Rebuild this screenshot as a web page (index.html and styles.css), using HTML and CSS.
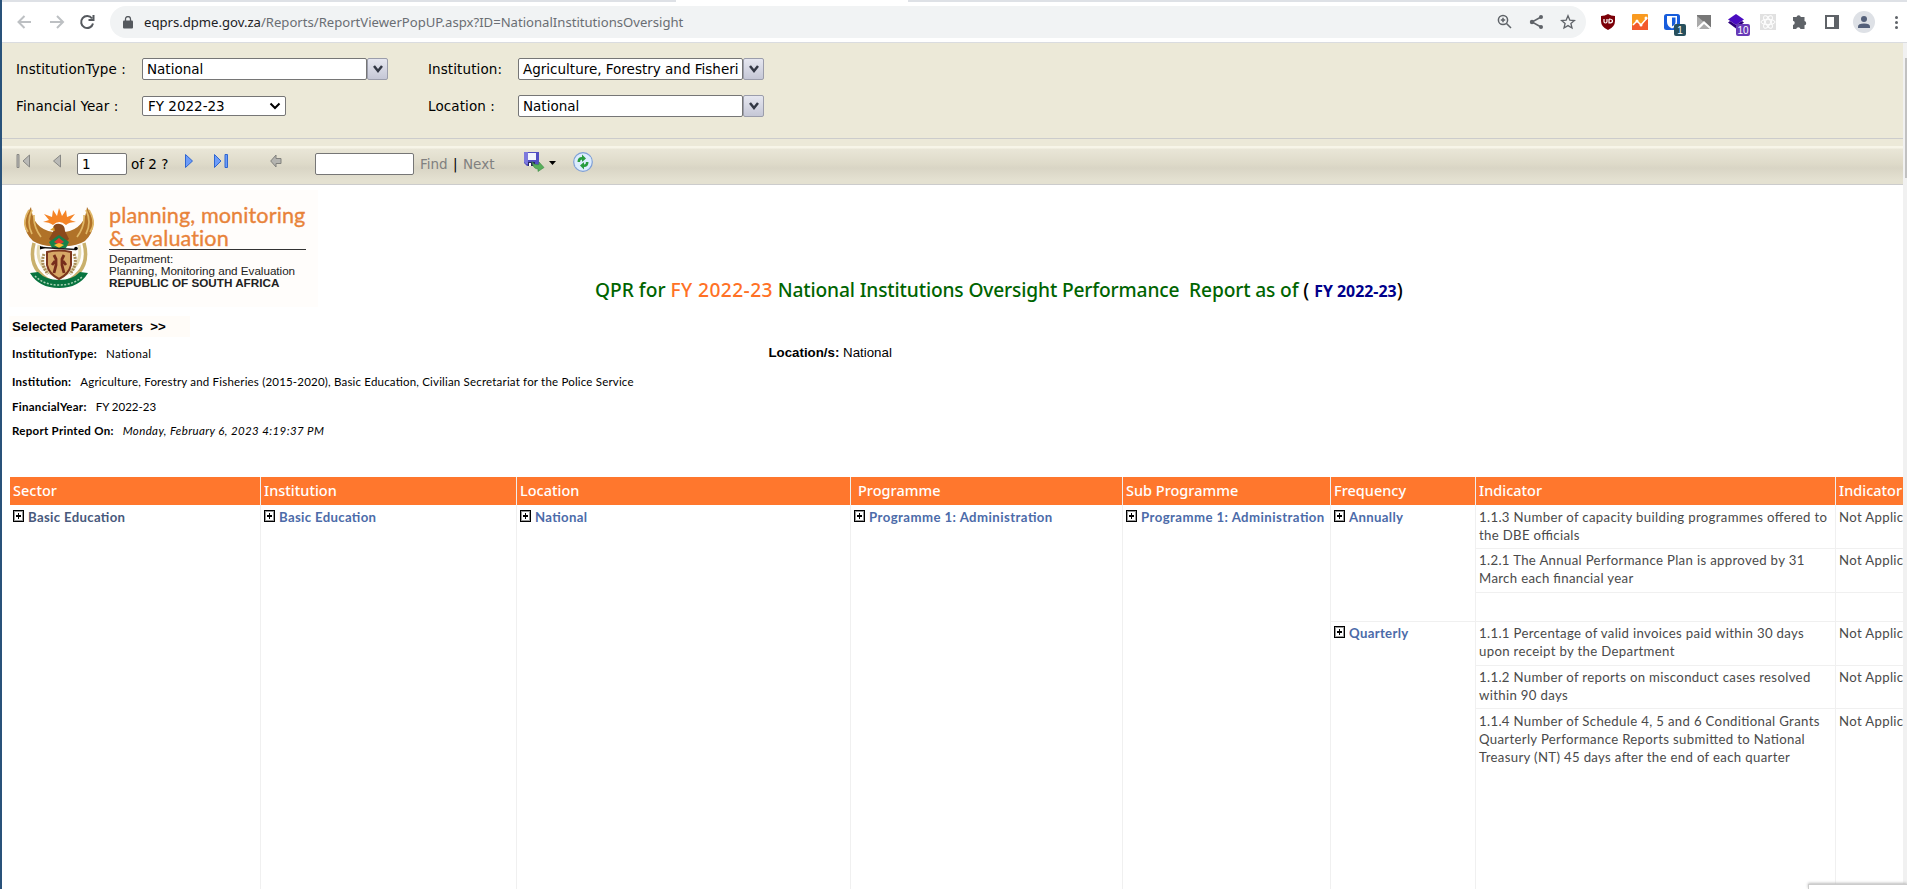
FILE: index.html
```html
<!DOCTYPE html>
<html lang="en">
<head>
<meta charset="utf-8">
<title>Report Viewer</title>
<link rel="stylesheet" href="styles.css">
</head>
<body>
<div class="window">
  <div class="tabstrip"><span class="active-tab"></span></div>
  <header class="browser">
    <svg class="nav" width="84" height="24" viewBox="0 0 84 24" fill="none" stroke-width="2">
      <path d="M16 12H4M9.500 6L3.500 12l6 6" stroke="#bdc0c3"/>
      <path d="M35 12H48M42 6l6 6l-6 6" stroke="#bdc0c3"/>
      <path d="M77 8.500A6 6 0 1 0 78 13.500M78.500 5v5h-5" stroke="#55595e"/>
    </svg>
    <div class="omnibox">
      <svg class="lock" width="10" height="13" viewBox="0 0 10 13"><rect y="4.500" width="10" height="8" rx="1" fill="#55595e"/><path d="M2.500 5V3a2.500 2.500 0 0 1 5 0v2" fill="none" stroke="#55595e" stroke-width="1.300"/></svg>
      <span class="url"><b>eqprs.dpme.gov.za</b>/Reports/ReportViewerPopUP.aspx?ID=NationalInstitutionsOversight</span>
      <svg class="page-actions" width="80" height="16" viewBox="0 0 80 16" fill="none" stroke="#5f6368" stroke-width="1.500">
        <circle cx="6" cy="6" r="4.600"/><path d="M9.500 9.500L14 14M6 3.800v4.400M3.800 6h4.400"/>
        <path d="M44 3L35 8l9 5"/><g fill="#5f6368" stroke="none"><circle cx="44" cy="3" r="2"/><circle cx="35" cy="8" r="2.200"/><circle cx="44" cy="13" r="2"/></g>
        <path d="M71 1.800l1.800 4.300 4.600.4-3.500 3 1.100 4.500-4-2.400-4 2.400 1.100-4.500-3.500-3 4.600-.4z" stroke-width="1.300"/>
      </svg>
    </div>
    <svg class="extensions" width="307" height="32" viewBox="1600 6 307 32">
      <path d="M1601 16q4 0 7-2q3 2 7 2v5q0 6-7 9q-7-3-7-9z" fill="#7b0008"/>
      <path d="M1604 19v2.500q0 1.500 1.500 1.500t1.500-1.500V19M1609 19v4q3.500 0 3.500-2t-3.500-2" fill="none" stroke="#fff" stroke-width="1.200"/>
      <rect x="1632" y="14" width="16" height="16" rx="1" fill="#f99a20"/><path d="M1632 26l5-5 4 4 7-7v12h-16z" fill="#f3592b"/>
      <path d="M1633 25l4-4 4 4 6-7" fill="none" stroke="#fff" stroke-width="1.500"/><g fill="#fff"><circle cx="1637" cy="21" r="1.500"/><circle cx="1641" cy="25" r="1.500"/><circle cx="1646" cy="18" r="1.500"/></g>
      <rect x="1664" y="14" width="16" height="16" rx="2.500" fill="#175ddc"/><path d="M1667 16h10v6q0 4-5 6.500q-5-2.500-5-6.500z" fill="#fff"/><path d="M1672 17.500h3.500V22q0 2.500-3.500 4.500z" fill="#175ddc"/>
      <rect x="1674" y="24" width="12" height="12" rx="2" fill="#27505e"/><text x="1680" y="34" class="ext-count">1</text>
      <path d="M1697 15h14v14l-7-7-7 7z" fill="#777"/><path d="M1697 16l7 6-7 7zM1704 24l6 5h-11z" fill="#aaa"/><path d="M1697 28.500l7-6.500 7 6.500" stroke="#fff" fill="none" stroke-width="1.500"/>
      <path d="M1736 14l8 5.500-8 5.500-8-5.500z" fill="#4a0cc0"/><path d="M1728 22.500l2-1.500 6 4 6-4 2 1.500-8 6z" fill="#2d007c"/>
      <rect x="1736" y="24" width="14" height="12" rx="2" fill="#683ab7"/><text x="1743" y="34" class="ext-count">10</text>
      <rect x="1760" y="14" width="16" height="16" fill="#e1e1e1"/><g fill="none" stroke="#fff"><ellipse cx="1768" cy="22" rx="7" ry="2.700"/><ellipse cx="1768" cy="22" rx="7" ry="2.700" transform="rotate(60 1768 22)"/><ellipse cx="1768" cy="22" rx="7" ry="2.700" transform="rotate(120 1768 22)"/></g>
      <path d="M1793 17h3.500a2.200 2.200 0 0 1 4.300 0h3.700v4a2.200 2.200 0 0 1 0 4.300v3.700h-4a2.200 2.200 0 0 0-4.300 0H1793v-4a2.200 2.200 0 0 0 0-4.300z" fill="#5f6368"/>
      <path d="M1826 16h12v12h-12z" fill="none" stroke="#5f6368" stroke-width="2"/><path d="M1834 16h4v12h-4z" fill="#5f6368"/>
      <circle cx="1864" cy="22" r="11" fill="#dee1e6"/><circle cx="1864" cy="19" r="3" fill="#54607a"/><path d="M1858 28v-1.500q0-3 6-3t6 3V28z" fill="#54607a"/>
      <g fill="#5f6368"><circle cx="1896.500" cy="17.500" r="1.500"/><circle cx="1896.500" cy="22.500" r="1.500"/><circle cx="1896.500" cy="27.500" r="1.500"/></g>
    </svg>
  </header>

  <main class="viewer">
    <section class="params">
      <label>InstitutionType :</label>
      <div class="combo"><span class="field">National</span><span class="drop"><svg width="10" height="8" viewBox="0 0 10 8"><path d="M1 1l4 5 4-5" fill="none" stroke="#333845" stroke-width="2.500"/></svg></span></div>
      <label>Institution:</label>
      <div class="combo"><span class="field">Agriculture, Forestry and Fisheri</span><span class="drop"><svg width="10" height="8" viewBox="0 0 10 8"><path d="M1 1l4 5 4-5" fill="none" stroke="#333845" stroke-width="2.500"/></svg></span></div>
      <label>Financial Year :</label>
      <div class="select"><span>FY 2022-23</span><svg width="12" height="8" viewBox="0 0 12 8"><path d="M1.500 1.500L6 6l4.500-4.500" fill="none" stroke="#000" stroke-width="2"/></svg></div>
      <label>Location :</label>
      <div class="combo"><span class="field">National</span><span class="drop"><svg width="10" height="8" viewBox="0 0 10 8"><path d="M1 1l4 5 4-5" fill="none" stroke="#333845" stroke-width="2.500"/></svg></span></div>
    </section>
    <div class="splitter"></div>
    <section class="toolbar">
      <svg class="first-prev" width="47" height="16" viewBox="0 0 47 16"><g fill="#b9b9b6" stroke="#888885"><path d="M1 1.500h2v13H1zM13.500 2v12L7 8zM44.500 2v12l-7-6z"/></g></svg>
      <span class="page-no">1</span><span class="page-of">of 2 ?</span>
      <svg class="next-last" width="46" height="16" viewBox="0 0 46 16"><g fill="#6d9cf8" stroke="#2f66d0"><path d="M.5 1.500v13l7-6.500zM29.500 1.500v13L36 8zM40 1.500h2.500v13H40z"/></g></svg>
      <svg class="back" width="12" height="14" viewBox="0 0 12 14"><path d="M.7 7L6 1v3.500h5v5H6V13z" fill="#b4b4b0" stroke="#82827e"/></svg>
      <span class="find-box"></span><span class="find">Find</span><span class="bar">|</span><span class="next">Next</span>
      <svg class="export" width="33" height="20" viewBox="0 0 33 20"><path d="M0 0h15v14H3l-3-3z" fill="#514ec2"/><path d="M0 0h4v12H2l-2-2z" fill="#7c79dc"/><path d="M4 1h8v7H4z" fill="#f1f4fd"/><path d="M4 10h7v4H4z" fill="#292b5e"/><path d="M5 11h2v3H5z" fill="#fff"/><path d="M8 9.500q2 4 7 3V10l5 5.500-6 4v-2.500q-5 0-6-7.500z" fill="#57af5b" stroke="#3a8b45" stroke-width=".6"/><path d="M25 9h7l-3.500 4z"/></svg>
      <svg class="refresh" width="20" height="20" viewBox="0 0 20 20"><circle cx="10" cy="10" r="9.300" fill="#dcecfd" stroke="#7e9fd6" stroke-width="1.200"/><path d="M4.500 10q0-5 4.500-5V2.500l4 4-4 3.500V7.500q-2 0-2 2.500zM15.500 10q0 5-4.500 5v2.500l-4-4 4-3.500v2.500q2 0 2-2.500z" fill="#279c3d"/><path d="M10 1v18" stroke="#dcecfd" stroke-width=".8" transform="rotate(60 10 10)"/></svg>
    </section>

    <section class="report">
      <div class="masthead">
        <div class="logo">
          <svg class="emblem" width="70" height="84" viewBox="0 0 70 84">
            <path d="M10 37q-8 30 25 42q33-12 25-42" fill="none" stroke="#c9b06c" stroke-width="3.500"/>
            <path d="M15 39q-5 22 20 33q25-11 20-33" fill="none" stroke="#e4d9b0" stroke-width="3"/>
            <path d="M6 67l8-1q8 8 21 8t21-8l8 1q-9 15-29 15T6 67z" fill="#08733f"/>
            <path d="M11 70q9 9 24 9t24-9" fill="none" stroke="#a9d3b4" stroke-width="1.500" stroke-dasharray="2 1.500"/>
            <path d="M7 1q-13 20 2 34q10 6 22 5l-2-14Q9 23 7 1zM63 1q13 20-2 34q-10 6-22 5l2-14Q61 23 63 1z" fill="#b07228"/>
            <path d="M5 4Q-3 17 4 26M8 4Q2 16 8 28M10 9Q9 20 17 31M65 4q8 13 1 22M62 4q6 12 0 24M60 9q1 11-7 22" fill="none" stroke="#e0b766" stroke-width="1.700"/>
            <path d="M19 16l6-2-5-6 8 3 1-7 4 6 2-8 3 8 4-6 1 7 8-3-5 6 6 2q-7 0-10 3-7-6-13 0-4-3-10-3z" fill="#f58426"/>
            <path d="M29 22q1-5 7-4 5 1 5 7l4 8-7 7h-6l-7-7 5-9z" fill="#8b4a1c"/><path d="M30 21l-4 3 5 1z" fill="#d99c27"/>
            <path d="M25 36l10-7 10 7-3 6H28z" fill="#16824a"/><path d="M30 36l5-4 5 4-5 3z" fill="#db3c2e"/><path d="M30 39l5-2 5 2-5 3z" fill="#f6bf33"/>
            <path d="M18 41.500l34 2" stroke="#222" stroke-width="1.500"/><circle cx="52" cy="42.500" r="1.800"/><path d="M16 40l6 1.800-6 1.700z"/>
            <path d="M23 46q12-3 24 0v13q-2 9-12 14-10-5-12-14z" fill="#d6a766" stroke="#7c361e" stroke-width="2"/>
            <path d="M30 49l2 4 0 6-2 8M40 49l-2 4 0 6 2 8M31 55l-3 4M39 55l3 4" fill="none" stroke="#772d1b" stroke-width="2.800"/>
            <path d="M20 48q-4 10 4 20M50 48q4 10-4 20" fill="none" stroke="#a88c58" stroke-width="3" stroke-dasharray="2 1"/>
          </svg>
          <div class="logo-text">
            <div class="brand brand-a">planning, monitoring</div>
            <div class="brand brand-b">&amp; evaluation</div>
            <div class="dept">Department:</div>
            <div class="dept dept-name">Planning, Monitoring and Evaluation</div>
            <div class="dept republic">REPUBLIC OF SOUTH AFRICA</div>
          </div>
        </div>
        <h1><span class="t1">QPR for </span><span class="t2">FY 2022-23</span><span class="t3"> National Institutions Oversight Performance&nbsp; Report as of </span><span class="t4">( </span><b class="t5">FY 2022-23</b><span class="t4">)</span></h1>
      </div>
      <div class="selected"><span>Selected Parameters&nbsp; &gt;&gt;</span></div>
      <div class="meta m1"><b>InstitutionType:</b><span>National</span><p class="loc"><b>Location/s:</b> National</p></div>
      <div class="meta m2"><b>Institution:</b><span>Agriculture, Forestry and Fisheries (2015-2020), Basic Education, Civilian Secretariat for the Police Service</span></div>
      <div class="meta m3"><b>FinancialYear:</b><span>FY 2022-23</span></div>
      <div class="meta m4"><b>Report Printed On:</b><i>Monday, February 6, 2023 4:19:37 PM</i></div>

      <div class="grid">
        <div class="th">Sector</div><div class="th">Institution</div><div class="th">Location</div><div class="th prog">Programme</div><div class="th">Sub Programme</div><div class="th">Frequency</div><div class="th">Indicator</div><div class="th">Indicator</div>
        <div class="td tall sector"><i class="plus"></i>Basic Education</div>
        <div class="td tall"><i class="plus"></i>Basic Education</div>
        <div class="td tall"><i class="plus"></i>National</div>
        <div class="td tall programme"><i class="plus"></i>Programme 1: Administration</div>
        <div class="td tall programme"><i class="plus"></i>Programme 1: Administration</div>
        <div class="td annual"><i class="plus"></i>Annually</div>
        <div class="ind">1.1.3 Number of capacity building programmes offered to<br>the DBE officials</div><div class="ind">Not Applic</div>
        <div class="ind snug">1.2.1 The Annual Performance Plan is approved by 31<br>March each financial year</div><div class="ind snug">Not Applic</div>
        <div class="ind"></div><div class="ind"></div>
        <div class="td quarter snug"><i class="plus"></i>Quarterly</div>
        <div class="ind snug">1.1.1 Percentage of valid invoices paid within 30 days<br>upon receipt by the Department</div><div class="ind snug">Not Applic</div>
        <div class="ind snug">1.1.2 Number of reports on misconduct cases resolved<br>within 90 days</div><div class="ind snug">Not Applic</div>
        <div class="ind">1.1.4 Number of Schedule 4, 5 and 6 Conditional Grants<br>Quarterly Performance Reports submitted to National<br>Treasury (NT) 45 days after the end of each quarter</div><div class="ind">Not Applic</div>
      </div>
    </section>
  </main>
  <div class="scrollbar"><span></span></div>
  <div class="status-pop"></div>
</div>
</body>
</html>
```
FILE: styles.css
```css
* { box-sizing: border-box; }
body { margin: 0; background: #fff; color: #000; font-family: "DejaVu Sans", sans-serif; }
svg { display: block; flex: none; }
.window { position: relative; width: 1907px; height: 889px; overflow: hidden; border-left: 2px solid #29527a; }
.tabstrip { height: 2px; background: #dee1e6; padding-left: 674px; }
.active-tab { display: block; width: 232px; height: 2px; background: #fff; }
.browser { height: 41px; border-bottom: 1px solid #dadce0; display: flex; align-items: center; }
.nav { margin-left: 13px; }
.omnibox { margin-left: 11px; width: 1476px; height: 32px; border-radius: 16px; background: #f1f3f4; display: flex; align-items: center; padding-left: 13px; }
.url { margin-left: 11px; font: 13.120px/20px "Noto Sans", sans-serif; color: #6a6e73; white-space: nowrap; }
.url b { font-weight: 400; color: #202124; }
.page-actions { margin-left: auto; margin-right: 9px; }
.extensions { margin-left: auto; }
.ext-count { font: 10px "Liberation Sans", sans-serif; fill: #fff; text-anchor: middle; }

.viewer { width: 1901px; height: 846px; overflow: hidden; }
.params { height: 95px; padding: 15px 0 0 14px; background: #ece9d8; display: grid; grid-template-columns: 126px 286px 90px 246px; grid-template-rows: 22px 22px; row-gap: 15px; align-items: center; font-size: 13.500px; white-space: nowrap; }
.params label { letter-spacing: .1px; }
.combo { display: flex; height: 22px; }
.field { width: 225px; border: 1px solid #767676; border-radius: 2px; background: #fff; padding-left: 4px; line-height: 21px; overflow: hidden; }
.drop { width: 21px; height: 22px; border: 1px solid #9b9dab; border-radius: 2px; background: linear-gradient(#e6e7f0, #c5c7d6); display: grid; place-items: center; }
.select { width: 144px; height: 20px; border: 1px solid #767676; border-radius: 2px; background: #fff; display: flex; align-items: center; justify-content: space-between; padding: 0 4px 0 5px; }
.splitter { height: 8px; border-top: 1px solid #ccc; background: #ece9d8; }
.toolbar { height: 39px; border-bottom: 1px solid #ccc; background: linear-gradient(#f7f5e8 0, #f7f5e8 2px, #e9e6d7 3px, #dedac9 18px, #d9d5c5 22px, #e4e1d1 34px); display: flex; align-items: flex-start; padding: 7px 0 0 14px; font-size: 13.500px; line-height: 23px; white-space: nowrap; }
.page-no { width: 50px; height: 22px; margin-left: 14px; border: 1px solid #767676; border-radius: 2px; background: #fff; padding-left: 4px; line-height: 21px; }
.page-of { margin-left: 4px; width: 54px; }
.back { margin: 1px 0 0 39px; }
.find-box { width: 99px; height: 22px; margin-left: 33px; border: 1px solid #767676; border-radius: 2px; background: #fff; }
.find, .next { color: #808080; }
.find { margin-left: 6px; width: 33px; }
.bar { width: 10px; }
.export { margin-left: 30px; margin-top: -1px; }
.refresh { margin-left: 16px; margin-top: -1px; }

.report { padding: 5px 0 0 7px; font-family: Lato, sans-serif; }
.masthead { display: flex; align-items: flex-start; }
.logo { width: 309px; height: 117px; background: #fffdfb; display: flex; padding: 13px 0 0 15px; }
.emblem { margin-top: 3px; }
.logo-text { margin-left: 15px; width: 197px; font-family: "Liberation Sans", sans-serif; white-space: nowrap; color: #222; }
.brand { font-family: Lato, sans-serif; color: #e8833a; font-size: 21.600px; line-height: 24px; letter-spacing: .1px; -webkit-text-stroke: .35px #e8833a; }
.brand-b { border-bottom: 1px solid #333; height: 23px; line-height: 23px; margin-bottom: 3px; }
.dept { font-size: 11.700px; line-height: 12px; }
.dept-name { letter-spacing: -.03px; }
.republic { font-weight: 700; line-height: 11px; }
h1 { margin: 87px 0 0 277px; font: 500 19.200px/26px "Noto Sans", sans-serif; white-space: pre; }
.t1, .t3 { color: #006400; }
.t2 { color: #ff7125; letter-spacing: .4px; }
.t3 { letter-spacing: -.15px; }
.t5 { color: #00008b; font-size: 15.900px; }
.selected { margin-top: 9px; width: 181px; height: 21px; background: #fffcf8; font: 700 13.300px/21px "Liberation Sans", sans-serif; padding-left: 3px; white-space: nowrap; }
.meta { display: flex; gap: 9px; padding-left: 3px; font-size: 11.500px; line-height: 16px; white-space: nowrap; letter-spacing: .19px; font-feature-settings: "liga" 1; }
.meta b { letter-spacing: .28px; }
.meta i { letter-spacing: .39px; }
.m1 { margin-top: 8px; height: 29px; padding-top: 1px; }
.m1 > b, .m1 > span { letter-spacing: .38px; }
.meta .loc { margin: -1px 0 0 608px; font: 13.300px/16px "Liberation Sans", sans-serif; }
.meta .loc, .meta .loc b { letter-spacing: 0; }
.m2 { height: 25px; }
.m3 { height: 24px; }
.m3 span { letter-spacing: 0; }
.m4 { height: 54px; }
.grid { margin-left: 1px; display: grid; width: 1960px; grid-template-columns: 251px 256px 334px 272px 208px 145px 360px 134px; grid-template-rows: 28px 44px 44px 29px 44px 43px 200px; font-size: 13.200px; letter-spacing: .33px; font-feature-settings: "liga" 1; color: #4a4a4a; }
.th { background: #ff772d; color: #fff; font: 500 14.500px/27px "Noto Sans", sans-serif; letter-spacing: 0; padding-left: 3px; border-right: 1px solid #eee; white-space: nowrap; }
.prog { padding-left: 7px; }
.td { border-right: 1px solid #f0f0f0; padding: 3px 0 0 3px; font-weight: 700; color: #4c6ba9; line-height: 18px; white-space: nowrap; }
.sector { color: #48597c; }
.programme { letter-spacing: .44px; }
.tall { grid-row: 2 / 8; }
.annual { grid-row: 2 / 5; grid-column: 6; border-bottom: 1px solid #f0f0f0; }
.quarter { grid-row: 5 / 8; grid-column: 6; }
.ind { border-right: 1px solid #f0f0f0; border-bottom: 1px solid #f0f0f0; padding: 3px 0 0 3px; line-height: 18px; white-space: nowrap; }
.snug { padding-top: 2px; }
.plus { display: inline-block; width: 11px; height: 12px; margin-right: 4px; border: 1px solid #000; outline: 1px solid #999; outline-offset: -2px; background: linear-gradient(#000, #000) 50% 50% / 5px 2px no-repeat, linear-gradient(#000, #000) 50% 50% / 1px 6px no-repeat, #fff; }
.scrollbar { position: absolute; right: 0; top: 43px; width: 4px; height: 846px; background: #f1f1f1; }
.scrollbar span { display: block; margin: 15px 0 0 2px; width: 2px; height: 120px; background: #c1c1c1; }
.status-pop { position: absolute; right: 0; bottom: 0; width: 99px; height: 5px; background: #fff; border: 1px solid #ccc; border-width: 1px 0 0 1px; box-shadow: 0 -1px 3px #bbb; }
```
